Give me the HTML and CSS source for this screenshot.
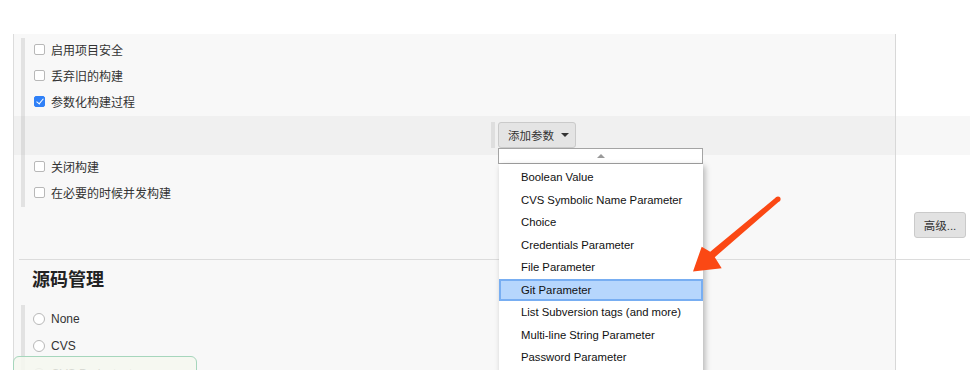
FILE: index.html
```html
<!DOCTYPE html>
<html lang="zh-CN">
<head>
    <meta charset="UTF-8">
    <title>Jenkins - 配置</title>
    <link rel="stylesheet" href="styles.css">
</head>
<body>
    <div class="config">
        <div class="main first">
            <div class="rail">
                <label class="opt"><span class="box"></span>启用项目安全</label>
                <label class="opt"><span class="box"></span>丢弃旧的构建</label>
                <label class="opt"><span class="box checked"></span>参数化构建过程</label>
            </div>
        </div>
        <div class="side"></div>

        <div class="main band">
            <div class="rail band-rail">
                <div class="add-param">
                    <span class="sub-rail"></span>
                    <div class="menu-anchor">
                        <button class="btn add-btn">添加参数 <span class="caret"></span></button>
                        <div class="dropdown">
                            <div class="scroll-up"><span class="up"></span></div>
                            <ul class="list">
                                <li>Boolean Value</li>
                                <li>CVS Symbolic Name Parameter</li>
                                <li>Choice</li>
                                <li>Credentials Parameter</li>
                                <li>File Parameter</li>
                                <li class="active">Git Parameter</li>
                                <li>List Subversion tags (and more)</li>
                                <li>Multi-line String Parameter</li>
                                <li>Password Parameter</li>
                            </ul>
                        </div>
                    </div>
                </div>
            </div>
        </div>
        <div class="side band-side"></div>

        <div class="main rest">
            <div class="rail">
                <label class="opt"><span class="box"></span>关闭构建</label>
                <label class="opt"><span class="box"></span>在必要的时候并发构建</label>
            </div>
        </div>
        <div class="side"><button class="btn adv">高级...</button></div>

        <div class="rule"></div>

        <div class="main scm">
            <h2>源码管理</h2>
            <div class="rail radios">
                <label class="opt"><span class="radio"></span>None</label>
                <label class="opt"><span class="radio"></span>CVS</label>
                <label class="opt faded"><span class="radio"></span>CVS Projectset</label>
            </div>
        </div>
        <div class="side"></div>
    </div>

    <div class="hint"></div>

    <svg class="arrow" width="980" height="370" viewBox="0 0 980 370">
        <polygon fill="#fb4814" points="776.4,197.1 710.2,251.8 701.7,246.7 693,271.5 721.7,268.3 714.8,257.2 779.6,200.9"/>
        <circle fill="#fb4814" cx="778" cy="199" r="2.6"/>
    </svg>
</body>
</html>
```

FILE: styles.css
```css
* {
    margin: 0;
    padding: 0;
    box-sizing: border-box;
}

html, body {
    height: 370px;
    overflow: hidden;
}

body {
    font-family: 'Liberation Sans', 'Noto Sans CJK SC', sans-serif;
    font-size: 12px;
    color: #333;
    background: white;
}

.config {
    margin: 34px 0 0 13px;
    width: 957px;
    border-left: 1px solid #dcdcdc;
    background: #f8f8f8;
    display: grid;
    grid-template-columns: 882px 74px;
}

.main {
    border-right: 1px solid #d8d8d8;
}

.side {
    background: white;
}

.first {
    padding-top: 4px;
}

.rail {
    margin-left: 7px;
    border-left: 4px solid #e2e2e2;
}

.opt {
    height: 26px;
    display: flex;
    align-items: center;
    gap: 6px;
    padding-left: 9px;
    padding-bottom: 4px;
}

.box {
    width: 11px;
    height: 11px;
    border: 1px solid #b8b8b8;
    border-radius: 2px;
    background: white;
}

.box.checked {
    background: #2f80f7;
    border-color: #2f80f7;
    position: relative;
}

.box.checked::after {
    content: "";
    position: absolute;
    left: 3px;
    top: 0px;
    width: 3px;
    height: 6px;
    border: solid white;
    border-width: 0 1.5px 1.5px 0;
    transform: rotate(40deg);
}

.band {
    background: #f0f0f0;
}

.band-side {
    background: #f7f7f7;
}

.band-rail {
    height: 39px;
    border-left-color: #dcdcdc;
}

.add-param {
    margin-left: 466px;
    padding-top: 6px;
    display: flex;
    gap: 3px;
}

.sub-rail {
    width: 4px;
    height: 26px;
    background: #dedede;
}

.menu-anchor {
    position: relative;
}

.btn {
    font-family: inherit;
    font-size: 11.5px;
    color: #333;
    background: #e4e4e4;
    border: 1px solid #cacaca;
    border-radius: 3px;
    height: 26px;
}

.add-btn {
    width: 78px;
    padding-left: 9px;
    text-align: left;
    display: flex;
    align-items: center;
    gap: 7px;
}

.caret {
    width: 0;
    height: 0;
    border-left: 4px solid transparent;
    border-right: 4px solid transparent;
    border-top: 4px solid #333;
}

.dropdown {
    position: absolute;
    top: 100%;
    left: 0;
    width: 205px;
    z-index: 5;
}

.scroll-up {
    height: 16px;
    border: 1px solid #a4a4a4;
    background: white;
    display: flex;
    align-items: center;
    justify-content: center;
}

.up {
    width: 0;
    height: 0;
    border-left: 4px solid transparent;
    border-right: 4px solid transparent;
    border-bottom: 4px solid #999;
}

.list {
    list-style: none;
    margin-left: 1px;
    height: 220px;
    background: white;
    padding-top: 2px;
    box-shadow: 2px 2px 6px rgba(0, 0, 0, 0.28);
}

.list li {
    height: 22.5px;
    line-height: 22.5px;
    padding-left: 22px;
    font-size: 11.3px;
    color: #111;
}

.list li.active {
    background: #b6d6fd;
    box-shadow: inset 0 0 0 2px #78aef2;
}

.rest {
    padding-bottom: 52px;
}

.adv {
    width: 52px;
    margin: 57px 0 0 18px;
    background: #e2e2e2;
}

.rule {
    grid-column: 1 / -1;
    height: 1px;
    margin-left: 5px;
    background: #dcdcdc;
}

.scm h2 {
    font-size: 18px;
    line-height: 24px;
    font-weight: bold;
    color: #222;
    padding: 8px 0 0 18px;
}

.radios {
    margin-top: 13px;
}

.radios .opt {
    height: 27px;
    padding-left: 8px;
    padding-bottom: 0;
}

.radios .faded {
    padding-top: 2px;
}

.radio {
    width: 12px;
    height: 12px;
    border: 1px solid #b8b8b8;
    border-radius: 50%;
    background: white;
}

.hint {
    position: absolute;
    left: 13px;
    top: 356px;
    width: 184px;
    height: 40px;
    border: 1px solid #a6d6bc;
    border-radius: 6px;
    background: rgba(246, 248, 240, 0.85);
}

.arrow {
    position: absolute;
    left: 0;
    top: 0;
    pointer-events: none;
    z-index: 10;
}
```
